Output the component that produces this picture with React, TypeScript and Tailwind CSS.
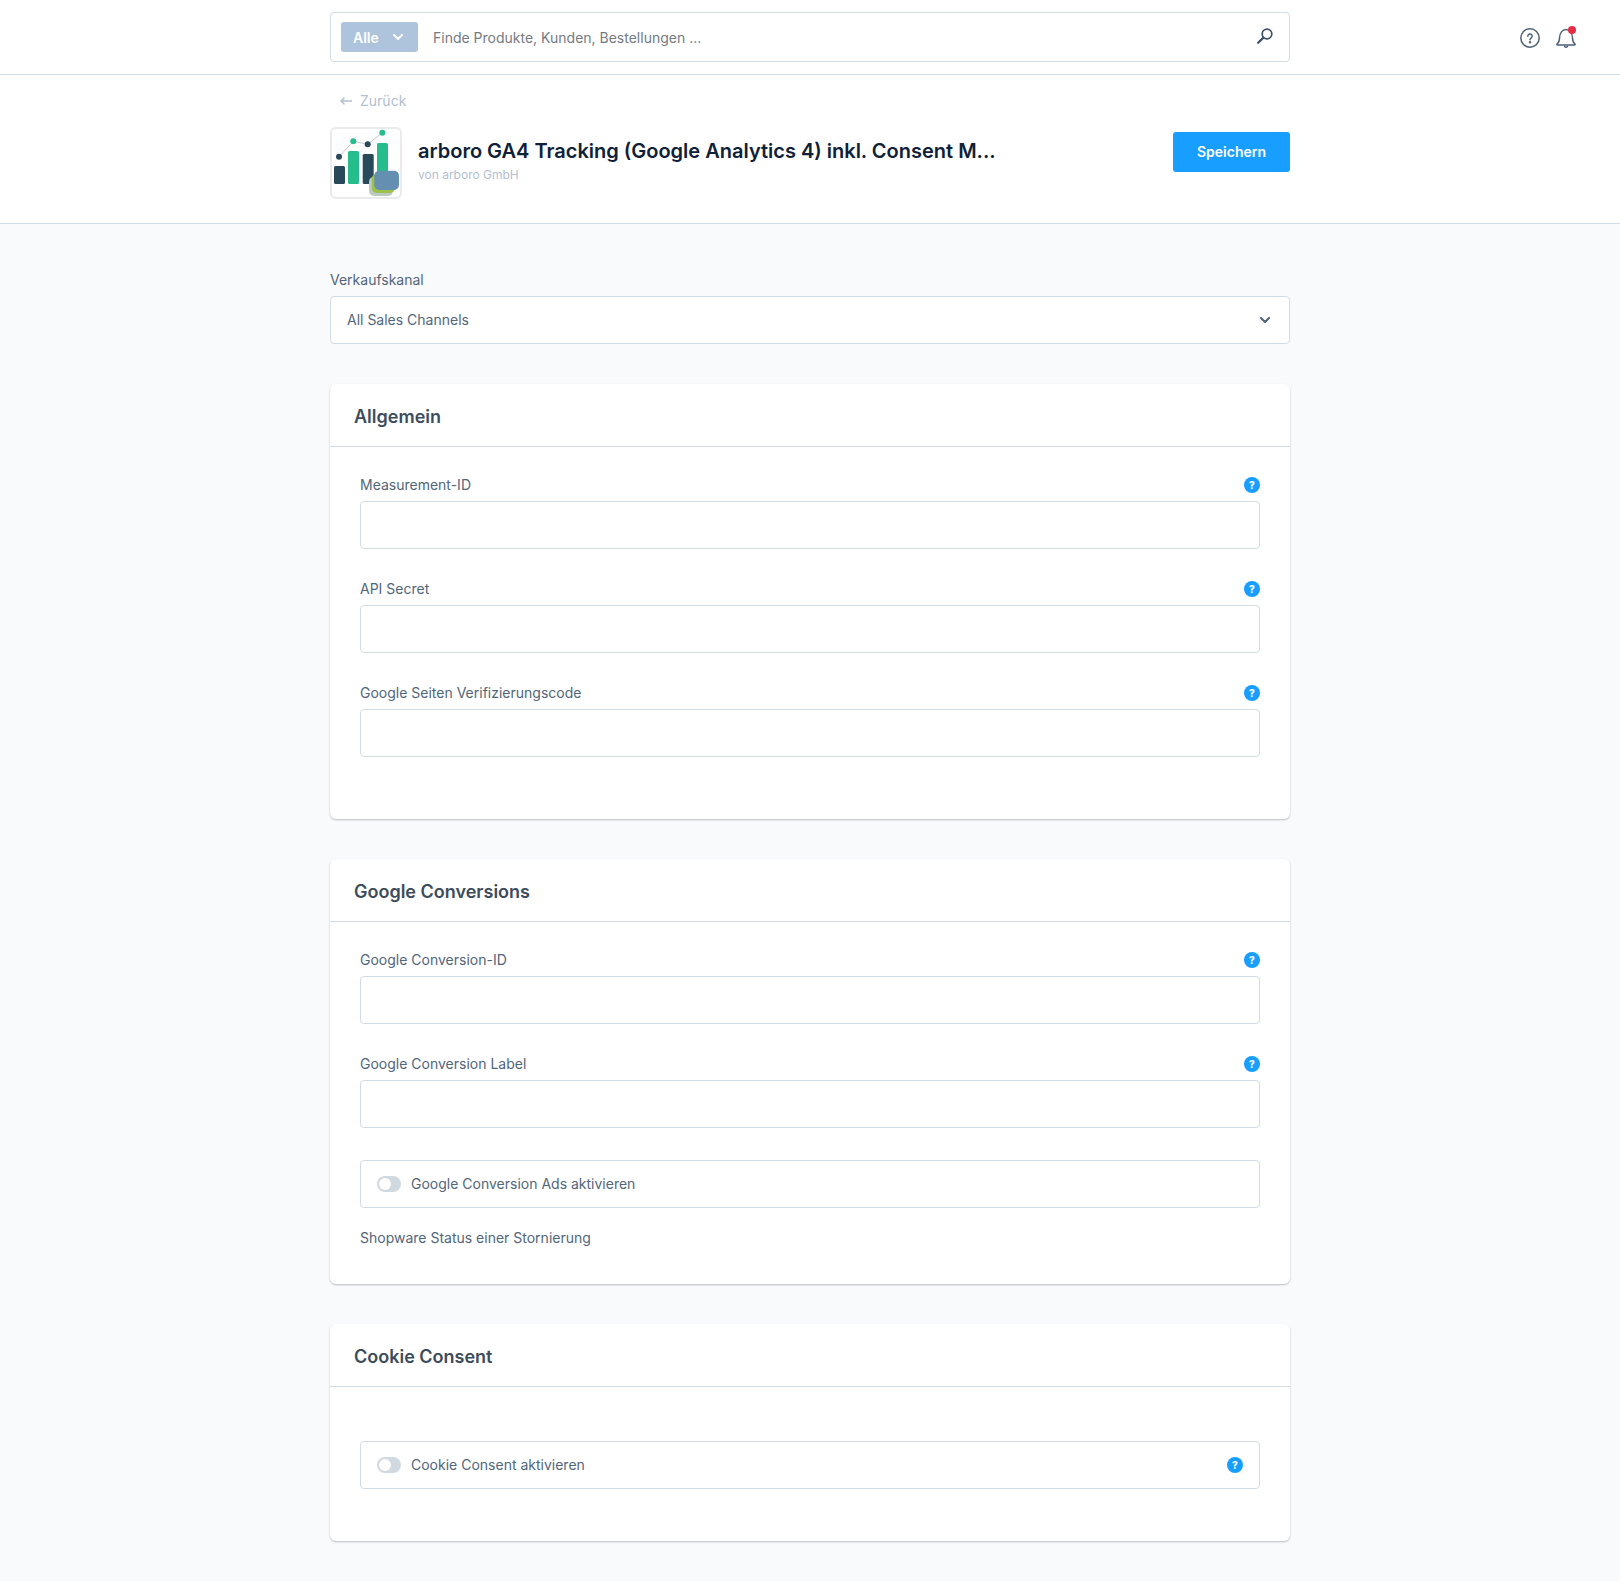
const font = "font-['Inter',sans-serif]";

function Chevron({ className }: { className?: string }) {
  return (
    <svg width="10" height="7" viewBox="0 0 10 7" fill="none" stroke="currentColor" strokeWidth="2" className={className}>
      <path d="M1 1l4 4 4-4" strokeLinecap="round" strokeLinejoin="round" />
    </svg>
  );
}

function HelpDot() {
  return (
    <span className="flex h-4 w-4 items-center justify-center rounded-full bg-[#189eff] text-[10px] font-extrabold leading-none text-white">
      ?
    </span>
  );
}

function Field({ label }: { label: string }) {
  return (
    <div className="mb-8">
      <div className="mb-2 flex h-4 items-center justify-between">
        <span className="text-sm leading-4 text-[#52667a]">{label}</span>
        <HelpDot />
      </div>
      <div className="h-12 rounded-[4px] border border-[#d1dbe6] bg-white" />
    </div>
  );
}

function Toggle({ label, help }: { label: string; help?: boolean }) {
  return (
    <div className="flex h-12 items-center rounded-[4px] border border-[#d1dbe6] bg-white pl-4 pr-4">
      <span className="relative mr-[10px] h-4 w-6 rounded-full bg-[#d1d9e0]">
        <span className="absolute left-[2px] top-[2px] h-3 w-3 rounded-full bg-white" />
      </span>
      <span className="flex-1 text-sm text-[#52667a]">{label}</span>
      {help && <HelpDot />}
    </div>
  );
}

function Card({ title, children }: { title: string; children: React.ReactNode }) {
  return (
    <section className="mb-10 rounded-[6px] bg-white shadow-[0_1px_2px_rgba(0,0,0,0.25)]">
      <h2 className="flex h-[63px] items-center border-b border-[#d1dbe6] px-6 pt-1 text-lg font-semibold text-[#3d4c5c]">
        {title}
      </h2>
      {children}
    </section>
  );
}

export default function App() {
  return (
    <div className={`${font} min-h-[1581px] bg-[#f9fafc]`}>
      <header className="flex h-[75px] border-b border-[#d1dbe6] bg-white">
        <div className="ml-[330px] mt-3 flex h-[50px] w-[960px] items-center rounded-[4px] border border-[#d1dbe6] pl-[10px] pr-4">
          <span className="flex h-[30px] w-[77px] items-center rounded-[3px] bg-[#aec4dc] pl-3 text-sm font-semibold text-white">
            <span className="pt-[1px]">Alle</span>
            <Chevron className="ml-[14px]" />
          </span>
          <span className="ml-[15px] flex-1 pt-[2px] text-sm text-[#757b82]">Finde Produkte, Kunden, Bestellungen ...</span>
          <svg width="16" height="16" viewBox="0 0 16 16" fill="none" stroke="#3d5166" className="-mt-[2px]">
            <circle cx="10" cy="6" r="4.8" strokeWidth="1.7" />
            <path d="M6.400 9.600L1.200 14.800" strokeWidth="2.200" strokeLinecap="round" />
          </svg>
        </div>
        <div className="ml-[230px] mt-[28px] flex gap-4">
          <svg width="20" height="20" viewBox="0 0 20 20" fill="none" stroke="#4d6278" strokeWidth="1.500">
            <circle cx="10" cy="10" r="9.200" />
            <path d="M7.800 8.200a2.200 2.200 0 1 1 3.300 1.900c-.7.400-1.100.8-1.100 1.600" strokeLinecap="round" />
            <circle cx="10" cy="14.200" r=".5" fill="#4d6278" />
          </svg>
          <svg width="20" height="20" viewBox="0 0 20 20" fill="none" stroke="#4d6278" strokeWidth="1.500" className="overflow-visible">
            <path
              d="M1 16c1.500-1 2.500-2.500 2.500-6 0-5 3-8.500 6.500-8.500s6.500 3.500 6.500 8.500c0 3.500 1 5 2.500 6 .3.500 0 1-.5 1H1.500c-.5 0-.8-.5-.5-1z"
              strokeLinejoin="round"
            />
            <path d="M8.200 17.500c.4 1.200 1 1.700 1.800 1.700s1.400-.5 1.800-1.700" />
            <circle cx="16" cy="2" r="4" fill="#e52d44" stroke="none" />
          </svg>
        </div>
      </header>

      <div className="border-b border-[#d1dbe6] bg-white">
        <div className="mx-auto h-[148px] w-[960px]">
          <div className="flex h-[52px] items-center pl-[10px] text-sm text-[#b3c0cf]">
            <svg width="12" height="10" viewBox="0 0 12 10" fill="none" stroke="currentColor" strokeWidth="1.500" className="mr-2">
              <path d="M12 5H1M4.500 1.500L1 5l3.500 3.500" />
            </svg>
            Zurück
          </div>
          <div className="flex items-start">
            <div className="flex h-[72px] w-[72px] items-center justify-center rounded-md border-2 border-[#e8eaeb] bg-white">
              <svg viewBox="2 2 68 68" width="68" height="68">
                <path d="M9 29.700L23.300 14.300l14.400 3 14.600-11.600" fill="none" stroke="#c3cacf" strokeWidth="1" />
                <circle cx="9" cy="29.700" r="3" fill="#28495a" />
                <circle cx="23.300" cy="14.300" r="3" fill="#24bd8b" />
                <circle cx="37.700" cy="17.300" r="3" fill="#28495a" />
                <circle cx="52.300" cy="5.700" r="3" fill="#24bd8b" />
                <rect x="4" y="39" width="11" height="18" rx="1.500" fill="#28495a" />
                <rect x="18" y="24" width="11" height="33" rx="1.500" fill="#24bd8b" />
                <rect x="32.700" y="27" width="11" height="30" rx="1.500" fill="#28495a" />
                <rect x="47" y="16" width="11" height="41" rx="1.500" fill="#24bd8b" />
                <rect x="39" y="49.700" width="24" height="19.300" rx="5" fill="#bccac6" />
                <rect x="41.700" y="47" width="23.300" height="19" rx="5" fill="#9cc04a" />
                <rect x="44.300" y="43.700" width="24.700" height="19.300" rx="5" fill="#648fb0" />
              </svg>
            </div>
            <div className="ml-4 mt-[10px] flex-1">
              <h1 className="text-[20px] font-semibold leading-7 text-[#0f2138]">
                arboro GA4 Tracking (Google Analytics 4) inkl. Consent M...
              </h1>
              <p className="mt-[2px] text-xs text-[#b3c0cf]">von arboro GmbH</p>
            </div>
            <button className="mt-[5px] h-10 w-[117px] rounded-[3px] bg-[#189eff] text-sm font-semibold text-white">
              Speichern
            </button>
          </div>
        </div>
      </div>

      <main className="mx-auto w-[960px] pt-12">
        <div className="mb-10">
          <div className="mb-2 text-sm leading-4 text-[#52667a]">Verkaufskanal</div>
          <div className="flex h-12 items-center justify-between rounded-[4px] border border-[#d1dbe6] bg-white pl-4 pr-[19px] text-sm text-[#52667a]">
            All Sales Channels
            <Chevron className="text-[#4d6278]" />
          </div>
        </div>

        <Card title="Allgemein">
          <div className="px-[30px] pt-[30px] pb-[30px]">
            <Field label="Measurement-ID" />
            <Field label="API Secret" />
            <Field label="Google Seiten Verifizierungscode" />
          </div>
        </Card>

        <Card title="Google Conversions">
          <div className="px-[30px] pt-[30px] pb-9">
            <Field label="Google Conversion-ID" />
            <Field label="Google Conversion Label" />
            <Toggle label="Google Conversion Ads aktivieren" />
            <div className="mt-5 text-sm leading-5 text-[#52667a]">Shopware Status einer Stornierung</div>
          </div>
        </Card>

        <Card title="Cookie Consent">
          <div className="px-[30px] pt-[54px] pb-[52px]">
            <Toggle label="Cookie Consent aktivieren" help />
          </div>
        </Card>
      </main>
    </div>
  );
}
